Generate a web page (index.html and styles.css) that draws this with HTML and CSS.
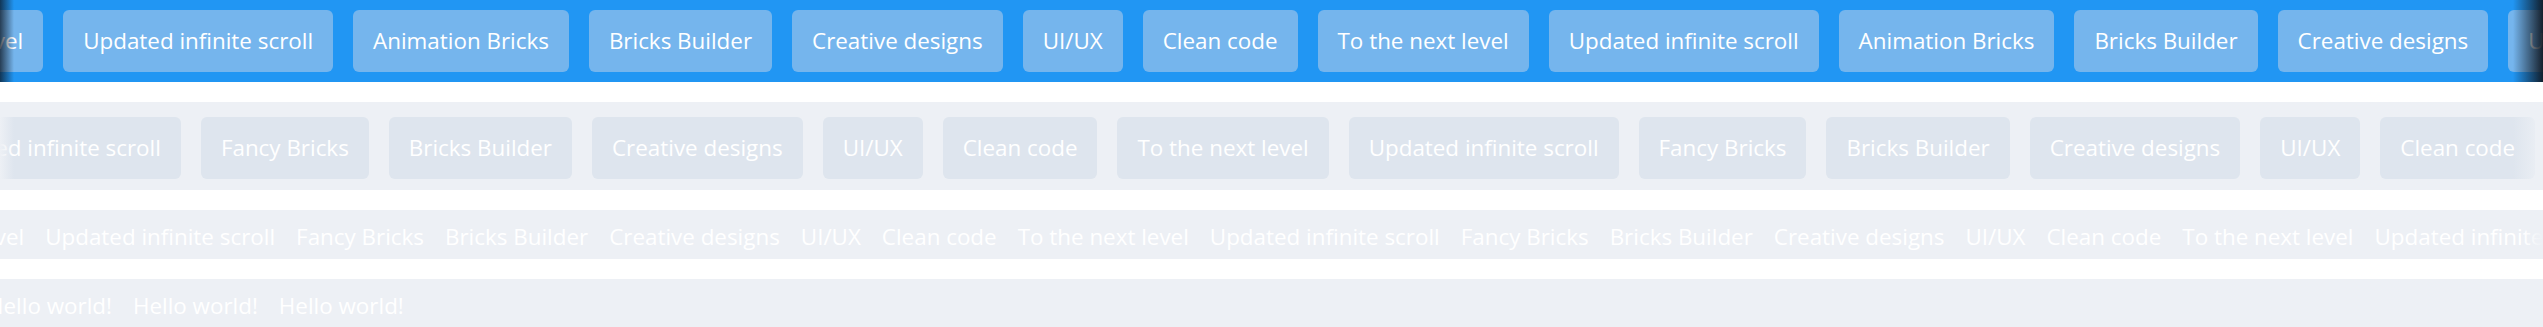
FILE: index.html
```html
<!DOCTYPE html>
<html lang="en">
<head>
    <meta charset="UTF-8">
    <meta name="viewport" content="width=device-width, initial-scale=1.0">
    <title>Marquee rows</title>
    <link rel="stylesheet" href="styles.css">
</head>
<body>
    <div class="page">
        <!-- Row 1: blue pills with dark edge shade -->
        <div class="marquee marquee-blue">
            <div class="track track-one">
                <span class="tag">To the next level</span>
                <span class="tag">Updated infinite scroll</span>
                <span class="tag">Animation Bricks</span>
                <span class="tag">Bricks Builder</span>
                <span class="tag">Creative designs</span>
                <span class="tag">UI/UX</span>
                <span class="tag">Clean code</span>
                <span class="tag">To the next level</span>
                <span class="tag">Updated infinite scroll</span>
                <span class="tag">Animation Bricks</span>
                <span class="tag">Bricks Builder</span>
                <span class="tag">Creative designs</span>
                <span class="tag">UI/UX</span>
                <span class="tag">Clean code</span>
            </div>
        </div>

        <!-- Row 2: light pills -->
        <div class="marquee marquee-light">
            <div class="track track-two">
                <span class="tag">Updated infinite scroll</span>
                <span class="tag">Fancy Bricks</span>
                <span class="tag">Bricks Builder</span>
                <span class="tag">Creative designs</span>
                <span class="tag">UI/UX</span>
                <span class="tag">Clean code</span>
                <span class="tag">To the next level</span>
                <span class="tag">Updated infinite scroll</span>
                <span class="tag">Fancy Bricks</span>
                <span class="tag">Bricks Builder</span>
                <span class="tag">Creative designs</span>
                <span class="tag">UI/UX</span>
                <span class="tag">Clean code</span>
                <span class="tag">To the next level</span>
            </div>
        </div>

        <!-- Row 3: plain text -->
        <div class="marquee marquee-text">
            <div class="track track-three">
                <span class="word">To the next level</span>
                <span class="word">Updated infinite scroll</span>
                <span class="word">Fancy Bricks</span>
                <span class="word">Bricks Builder</span>
                <span class="word">Creative designs</span>
                <span class="word">UI/UX</span>
                <span class="word">Clean code</span>
                <span class="word">To the next level</span>
                <span class="word">Updated infinite scroll</span>
                <span class="word">Fancy Bricks</span>
                <span class="word">Bricks Builder</span>
                <span class="word">Creative designs</span>
                <span class="word">UI/UX</span>
                <span class="word">Clean code</span>
                <span class="word">To the next level</span>
                <span class="word">Updated infinite scroll</span>
            </div>
        </div>

        <!-- Row 4: short text list -->
        <div class="marquee marquee-text">
            <div class="track track-four">
                <span class="word">Hello world!</span>
                <span class="word">Hello world!</span>
                <span class="word">Hello world!</span>
            </div>
        </div>
    </div>
</body>
</html>
```

FILE: styles.css
```css
body {
    margin: 0;
    background: #fff;
    font-family: "Open Sans", "Segoe UI", sans-serif;
    font-size: 22.4px;
    color: #fff;
}

.page {
    display: flex;
    flex-direction: column;
    gap: 20px;
}

.marquee {
    position: relative;
    overflow: hidden;
    background: #edf0f5;
}

/* edge shading */
.marquee::before,
.marquee::after {
    content: "";
    position: absolute;
    top: 0;
    bottom: 0;
    pointer-events: none;
}

.marquee::before {
    left: 0;
    width: 14px;
}

.marquee::after {
    right: 0;
    width: 30px;
}

.track {
    display: flex;
    gap: 20px;
    white-space: nowrap;
}

.tag {
    flex-shrink: 0;
    padding: 15px 20px;
    line-height: 32px;
    border-radius: 6px;
}

.word {
    flex-shrink: 0;
    line-height: 32px;
}

/* blue row */
.marquee-blue {
    background: #2196f3;
    padding: 10px 0;
}

.marquee-blue .tag {
    background: #75b5ed;
}

.marquee-blue::before {
    background: linear-gradient(to right, rgba(12, 22, 34, 0.75), rgba(12, 22, 34, 0));
}

.marquee-blue::after {
    background: linear-gradient(to left, rgba(16, 24, 34, 0.95), rgba(16, 24, 34, 0));
}

/* light rows */
.marquee-light {
    padding: 15px 0 11px;
}

.marquee-light .tag {
    background: #dee5ee;
}

.marquee-light::before {
    background: linear-gradient(to right, #edf0f5, rgba(237, 240, 245, 0));
}

.marquee-light::after,
.marquee-text::after {
    background: linear-gradient(to left, #edf0f5, rgba(237, 240, 245, 0));
}

.marquee-text {
    padding: 11px 0 6px;
}

.marquee-text .track {
    gap: 21px;
}

.marquee-text::after {
    width: 20px;
}

.track-one {
    margin-left: -168px;
}

.track-two {
    margin-left: -89px;
}

.track-three {
    margin-left: -147px;
}

.track-four {
    margin-left: -13px;
}
```
